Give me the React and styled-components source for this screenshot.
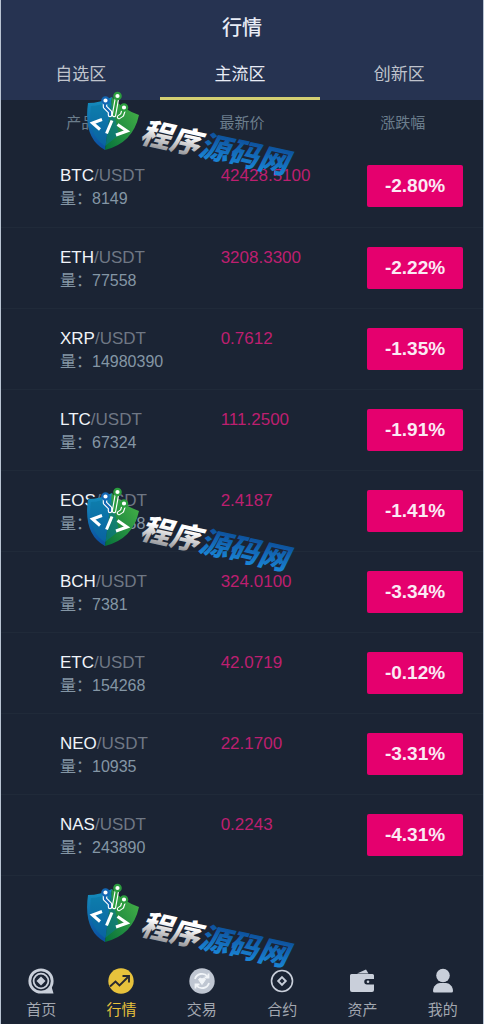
import React, {useState} from 'react'
import styled, {createGlobalStyle} from 'styled-components'

const colors = {
  page: '#1b2434',
  header: '#263351',
  pink: '#e5006e',
  price: '#bd1f70',
  muted: '#6b7d8c',
  yellow: '#e7c23c',
  icon: '#c9cfda'
}

const GlobalStyle = createGlobalStyle`
  * {
    box-sizing: border-box;
  }
  body {
    margin: 0;
    background: ${colors.page};
    font-family: "Liberation Sans", "Noto Sans CJK SC", sans-serif;
  }
`

const markets = [
  {coin: 'BTC', volume: '8149', price: '42428.5100', change: '-2.80%'},
  {coin: 'ETH', volume: '77558', price: '3208.3300', change: '-2.22%'},
  {coin: 'XRP', volume: '14980390', price: '0.7612', change: '-1.35%'},
  {coin: 'LTC', volume: '67324', price: '111.2500', change: '-1.91%'},
  {coin: 'EOS', volume: '835638', price: '2.4187', change: '-1.41%'},
  {coin: 'BCH', volume: '7381', price: '324.0100', change: '-3.34%'},
  {coin: 'ETC', volume: '154268', price: '42.0719', change: '-0.12%'},
  {coin: 'NEO', volume: '10935', price: '22.1700', change: '-3.31%'},
  {coin: 'NAS', volume: '243890', price: '0.2243', change: '-4.31%'}
]

const tabs = ['自选区', '主流区', '创新区']

const Screen = styled.div`
  position: relative;
  display: flex;
  flex-direction: column;
  min-height: 100vh;
  border: solid #b9c4d3;
  border-width: 0 1px;
  overflow: hidden;
`

const Header = styled.header`
  background: ${colors.header};
`

const Title = styled.h1`
  margin: 0;
  padding-top: 4px;
  font-size: 20px;
  line-height: 48px;
  font-weight: 500;
  text-align: center;
  color: #e8ecf6;
`

const Tabs = styled.div`
  display: grid;
  grid-template-columns: repeat(3, 1fr);
  padding-right: 4px;
`

const Tab = styled.button`
  height: 48px;
  padding: 0 0 4px;
  border: 0;
  border-bottom: 3px solid ${props => (props.$active ? '#d3cf72' : 'transparent')};
  background: none;
  font: inherit;
  font-size: 17px;
  color: ${props => (props.$active ? '#e8ecf6' : '#bfc3cc')};
`

const Table = styled.table`
  width: 100%;
  table-layout: fixed;
  border-collapse: collapse;
`

const HeadCell = styled.th`
  height: 46px;
  padding: 0 0 4px;
  font-size: 15px;
  font-weight: 400;
  color: ${colors.muted};
`

const Row = styled.tr`
  height: 81px;
  border-bottom: 1px solid #202a39;
`

const Cell = styled.td`
  padding: 18px 0 0 59px;
  vertical-align: top;
  font-size: 17px;
  line-height: 24px;
  white-space: nowrap;
  color: ${props => (props.$price ? colors.price : '#6f7784')};
`

const BadgeCell = styled.td`
  padding: 0 20px 0 0;
  text-align: right;
`

const Coin = styled.span`
  color: #f1f4f9;
`

const Volume = styled.div`
  font-size: 16px;
  line-height: 22px;
  color: #8496a5;
`

const Badge = styled.span`
  display: inline-block;
  width: 96px;
  border-radius: 2px;
  background: ${colors.pink};
  font-size: 19px;
  font-weight: 700;
  line-height: 42px;
  text-align: center;
  color: #fbeaf4;
`

const Nav = styled.nav`
  display: grid;
  grid-template-columns: repeat(6, 1fr);
  margin-top: auto;
  padding-bottom: 2px;
`

const NavLink = styled.a`
  display: flex;
  flex-direction: column;
  align-items: center;
  gap: 3px;
  font-size: 15px;
  line-height: 24px;
  text-decoration: none;
  color: ${props => (props.$active ? colors.yellow : '#a2a7b0')};

  svg {
    width: 28px;
    height: 28px;
  }
`

const Watermark = styled.svg`
  position: absolute;
  top: ${props => props.$top}px;
  left: 83px;
  width: 212px;
  height: 96px;
  pointer-events: none;
`

const HomeIcon = () => (
  <svg viewBox='0 0 28 28' fill='none' stroke={colors.icon}>
    <circle cx='14' cy='14' r='11.2' strokeWidth='2.800' />
    <circle cx='14' cy='14' r='7.4' strokeWidth='1.800' />
    <path d='M17 26.600h9.500l-2-7z' fill={colors.icon} stroke='none' />
    <path d='M14 9.500l4.500 4.500-4.500 4.500-4.500-4.500z' fill={colors.icon} stroke='none' />
  </svg>
)

const MarketIcon = () => (
  <svg viewBox='0 0 28 28' fill='none'>
    <circle cx='14' cy='14' r='12.700' fill={colors.yellow} />
    <path d='M3 19.500l5.500-5 4 4 8.500-8.500' stroke='#29292f' strokeWidth='1.900' />
    <path d='M15.500 9h6.500v6.500' stroke='#29292f' strokeWidth='1.900' />
  </svg>
)

const TradeIcon = () => (
  <svg viewBox='0 0 28 28' fill='none' stroke='#f1f4f8' strokeWidth='1.800'>
    <circle cx='14' cy='14' r='12.700' fill='#bfc6d2' stroke='none' />
    <path d='M7 12c1.500-5.500 9-7 12.500-2.500M20.500 6.500v4h-4M21 16c-1.500 5.500-9 7-12.500 2.500M7.500 21.500v-4h4' />
    <path d='M10.500 12.500q1.700-2.500 3.500-.5 1.800-2 3.500.5L14 17.500z' fill='#f1f4f8' strokeWidth='1' />
  </svg>
)

const ContractIcon = () => (
  <svg viewBox='0 0 28 28' fill='none' stroke={colors.icon} strokeWidth='1.600'>
    <circle cx='14' cy='14' r='10.500' />
    <path d='M14 10.200l3.800 3.800-3.800 3.800-3.800-3.800z' strokeWidth='1.900' />
  </svg>
)

const WalletIcon = () => (
  <svg viewBox='0 0 28 28' fill={colors.icon}>
    <path d='M9 6.500L18 2.500l2.500 4z' />
    <path d='M3.500 7h21q1.500 0 1.500 1.500V12h-7a2.500 2.500 0 0 0 0 5.500h7V23q0 2-2 2H4q-2 0-2-2V8.500Q2 7 3.500 7z' />
    <circle cx='20' cy='14.800' r='1.300' />
  </svg>
)

const UserIcon = () => (
  <svg viewBox='0 0 28 28' fill={colors.icon}>
    <circle cx='14' cy='8.500' r='6.800' />
    <path d='M4 24c0-5 4-8 7-8h6c3 0 7 3 7 8q0 1.500-1.500 1.500h-17Q4 25.500 4 24z' />
  </svg>
)

const links = [
  {label: '首页', Icon: HomeIcon},
  {label: '行情', Icon: MarketIcon},
  {label: '交易', Icon: TradeIcon},
  {label: '合约', Icon: ContractIcon},
  {label: '资产', Icon: WalletIcon},
  {label: '我的', Icon: UserIcon}
]

const SiteMark = ({top, id}) => (
  <Watermark $top={top} viewBox='0 0 212 96'>
    <defs>
      <linearGradient id={`${id}-silver`} gradientUnits='userSpaceOnUse' x1='0' y1='-26' x2='0' y2='3'>
        <stop offset='.3' stopColor='#fff' />
        <stop offset='1' stopColor='#97989c' />
      </linearGradient>
      <linearGradient id={`${id}-blue`} gradientUnits='userSpaceOnUse' x1='0' y1='-26' x2='0' y2='3'>
        <stop offset='0' stopColor='#0d4f9a' />
        <stop offset='1' stopColor='#1a86d6' />
      </linearGradient>
      <linearGradient id={`${id}-left`} x1='0' y1='0' x2='0' y2='1'>
        <stop offset='0' stopColor='#1590bd' />
        <stop offset='1' stopColor='#0b4da0' />
      </linearGradient>
      <linearGradient id={`${id}-right`} x1='1' y1='0' x2='0' y2='1'>
        <stop offset='0' stopColor='#4cb748' />
        <stop offset='1' stopColor='#05713b' />
      </linearGradient>
    </defs>
    <path d='M4 14Q16 14 28 8L21 61Q-1 49 4 14z' fill={`url(#${id}-left)`} />
    <path d='M28 8Q38 20 55 26Q49 54 21 61z' fill={`url(#${id}-right)`} />
    <path d='M7 17Q17 17 27 11L35 46L21 57Q3 46 7 17z' fill='#0873a0' opacity='.5' />
    <g fill='none' strokeLinecap='round' strokeLinejoin='round'>
      <path d='M21 13v5l5 5v3M33 9l-3 17M40 20l-2 6-3 2' stroke='#fff' strokeWidth='4.500' />
      <path d='M21 13v5l5 5v3' stroke='#1467b4' strokeWidth='2.200' />
      <path d='M33 9l-3 17M40 20l-2 6-3 2' stroke='#2b9d3e' strokeWidth='2.200' />
      <circle cx='21.500' cy='11.500' r='3.200' fill='#fff' stroke='#1467b4' strokeWidth='2.200' />
      <circle cx='33.500' cy='7' r='3.200' fill='#fff' stroke='#2b9d3e' strokeWidth='2.200' />
      <circle cx='40' cy='18.500' r='3.200' fill='#fff' stroke='#2b9d3e' strokeWidth='2.200' />
    </g>
    <path
      d='M18 30.500L8.500 34 16 40.500M28 31.500L22.500 44.500M33.500 35.500L43 42 32 46'
      fill='none'
      stroke='#fff'
      strokeWidth='3'
    />
    <text
      transform='translate(55 53) rotate(12.500)'
      fontFamily='"Noto Sans CJK SC", sans-serif'
      fontSize='30'
      fontWeight='900'
      fontStyle='italic'
    >
      <tspan fill={`url(#${id}-silver)`}>程序</tspan>
      <tspan fill={`url(#${id}-blue)`}>源码网</tspan>
    </text>
  </Watermark>
)

const App = () => {
  const [activeTab, setActiveTab] = useState(1)

  return (
    <Screen>
      <GlobalStyle />
      <Header>
        <Title>行情</Title>
        <Tabs>
          {tabs.map((tab, index) => (
            <Tab key={tab} $active={index === activeTab} onClick={() => setActiveTab(index)}>
              {tab}
            </Tab>
          ))}
        </Tabs>
      </Header>
      <Table>
        <thead>
          <tr>
            <HeadCell>产品</HeadCell>
            <HeadCell>最新价</HeadCell>
            <HeadCell>涨跌幅</HeadCell>
          </tr>
        </thead>
        <tbody>
          {markets.map(market => (
            <Row key={market.coin}>
              <Cell>
                <Coin>{market.coin}</Coin>/USDT
                <Volume>量：{market.volume}</Volume>
              </Cell>
              <Cell $price>{market.price}</Cell>
              <BadgeCell>
                <Badge>{market.change}</Badge>
              </BadgeCell>
            </Row>
          ))}
        </tbody>
      </Table>
      <Nav>
        {links.map(({label, Icon}) => (
          <NavLink key={label} href='#' $active={label === '行情'}>
            <Icon />
            {label}
          </NavLink>
        ))}
      </Nav>
      <SiteMark id='mark-top' top={89} />
      <SiteMark id='mark-middle' top={485} />
      <SiteMark id='mark-bottom' top={881} />
    </Screen>
  )
}

export default App
